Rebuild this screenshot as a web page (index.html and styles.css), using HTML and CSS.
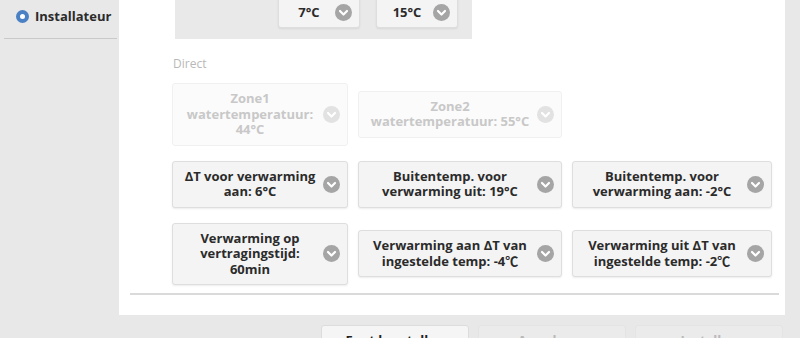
FILE: index.html
```html
<!DOCTYPE html>
<html lang="nl">
<head>
	<meta charset="UTF-8">
	<title>Installateur instellingen</title>
	<link rel="stylesheet" href="styles.css">
</head>
<body>
	<div class="page">
		<aside class="sidebar">
			<ul class="menu">
				<li><span class="radio off"></span>Gebruiker</li>
				<li class="active"><span class="radio"></span>Installateur</li>
			</ul>
		</aside>

		<div class="content">
			<main class="panel">
				<div class="section">
					<div class="range">
						<div class="select small">7°C<svg class="chev" viewBox="0 0 17 17"><circle cx="8.5" cy="8.5" r="8.5"/><path d="M5 7l3.5 3.5L12 7"/></svg></div>
						<div class="select small">15°C<svg class="chev" viewBox="0 0 17 17"><circle cx="8.5" cy="8.5" r="8.5"/><path d="M5 7l3.5 3.5L12 7"/></svg></div>
					</div>

					<div class="group-label">Direct</div>

					<div class="grid">
						<div class="select disabled">Zone1 watertemperatuur: 44°C<svg class="chev" viewBox="0 0 17 17"><circle cx="8.5" cy="8.5" r="8.5"/><path d="M5 7l3.5 3.5L12 7"/></svg></div>
						<div class="select disabled">Zone2 watertemperatuur: 55°C<svg class="chev" viewBox="0 0 17 17"><circle cx="8.5" cy="8.5" r="8.5"/><path d="M5 7l3.5 3.5L12 7"/></svg></div>
						<div class="empty"></div>

						<div class="select">ΔT voor verwarming aan: 6°C<svg class="chev" viewBox="0 0 17 17"><circle cx="8.5" cy="8.5" r="8.5"/><path d="M5 7l3.5 3.5L12 7"/></svg></div>
						<div class="select">Buitentemp. voor verwarming uit: 19°C<svg class="chev" viewBox="0 0 17 17"><circle cx="8.5" cy="8.5" r="8.5"/><path d="M5 7l3.5 3.5L12 7"/></svg></div>
						<div class="select">Buitentemp. voor verwarming aan: -2°C<svg class="chev" viewBox="0 0 17 17"><circle cx="8.5" cy="8.5" r="8.5"/><path d="M5 7l3.5 3.5L12 7"/></svg></div>

						<div class="select">Verwarming op vertragingstijd: 60min<svg class="chev" viewBox="0 0 17 17"><circle cx="8.5" cy="8.5" r="8.5"/><path d="M5 7l3.5 3.5L12 7"/></svg></div>
						<div class="select">Verwarming aan ΔT van ingestelde temp: -4℃<svg class="chev" viewBox="0 0 17 17"><circle cx="8.5" cy="8.5" r="8.5"/><path d="M5 7l3.5 3.5L12 7"/></svg></div>
						<div class="select">Verwarming uit ΔT van ingestelde temp: -2℃<svg class="chev" viewBox="0 0 17 17"><circle cx="8.5" cy="8.5" r="8.5"/><path d="M5 7l3.5 3.5L12 7"/></svg></div>
					</div>
				</div>
				<div class="divider"></div>
			</main>

			<div class="actions">
				<button class="btn">Fout herstellen</button>
				<button class="btn disabled">Annuleren</button>
				<button class="btn disabled">Instellen</button>
			</div>
		</div>
	</div>
</body>
</html>
```

FILE: styles.css
```css
html,body{
	margin:0;
	height:100%;
	overflow:hidden;
}
body{
	background:#e8e8e8;
	font-family:"Open Sans","Noto Sans CJK SC",sans-serif;
	font-size:13px;
	color:#2b2b2b;
}
ul,li{
	margin:0;
	padding:0;
	list-style:none;
}
/* page is scrolled down a bit, top of the form is out of view */
.page{
	display:flex;
	margin-top:-44px;
}
.sidebar{
	width:119px;
	flex:none;
}
.menu li{
	display:flex;
	align-items:center;
	font-weight:bold;
	line-height:20px;
	padding:9px 0 12px 12px;
	margin:0 2px 0 4px;
	border-bottom:1px solid #c9c9c9;
}
.menu li:first-child{
	padding:10px 0 10px 12px;
}
.radio{
	box-sizing:border-box;
	width:13px;
	height:13px;
	border-radius:50%;
	border:4px solid #4a80c4;
	background:#fff;
	margin-right:6px;
}
.radio.off{
	border:1px solid #999;
}
.content{
	flex:1;
	padding-right:15px;
}
.panel{
	background:#fff;
	padding-bottom:20px;
}
.section{
	padding-left:53px;
}
.range{
	display:flex;
	justify-content:flex-end;
	gap:16px;
	width:297px;
	box-sizing:border-box;
	margin-left:3px;
	padding:40px 14px 11px;
	background:#e9e9e9;
}
.group-label{
	margin-top:17px;
	padding-left:1px;
	font-size:12px;
	line-height:16px;
	color:#b8b8b8;
}
.grid{
	display:grid;
	grid-template-columns:176px 204px 200px;
	column-gap:10px;
	row-gap:15px;
	align-items:center;
	margin-top:11px;
}
.select{
	position:relative;
	box-sizing:border-box;
	padding:7px 30px 7px 10px;
	line-height:15.5px;
	font-weight:bold;
	text-align:center;
	background:#f4f4f4;
	border:1px solid #dedede;
	border-radius:3px;
	box-shadow:0 1px 2px rgba(0,0,0,.08);
}
.select.small{
	width:82px;
	line-height:16px;
}
.chev{
	position:absolute;
	right:7px;
	top:50%;
	width:17px;
	height:17px;
	margin-top:-8.5px;
}
.chev circle{
	fill:#a5a5a5;
}
.chev path{
	fill:none;
	stroke:#fff;
	stroke-width:2.2;
	stroke-linecap:round;
	stroke-linejoin:round;
}
.select.disabled{
	color:#c8c8c8;
	background:#fbfbfb;
	border-color:#f0f0f0;
	box-shadow:none;
}
.select.disabled .chev circle{
	fill:#e2e2e2;
}
.divider{
	height:2px;
	background:#dadada;
	margin:8px 6px 0 11px;
}
.actions{
	display:flex;
	justify-content:flex-end;
	gap:9px;
	margin-top:10px;
	padding-right:2px;
}
.btn{
	width:148px;
	padding:4px 0 10px;
	line-height:20px;
	font-family:inherit;
	font-size:13px;
	font-weight:bold;
	color:#222;
	background:#f5f5f5;
	border:1px solid #dcdcdc;
	border-radius:3px;
}
.btn.disabled{
	color:#b9b9b9;
	background:#ebebeb;
	border-color:#e4e4e4;
}
```
